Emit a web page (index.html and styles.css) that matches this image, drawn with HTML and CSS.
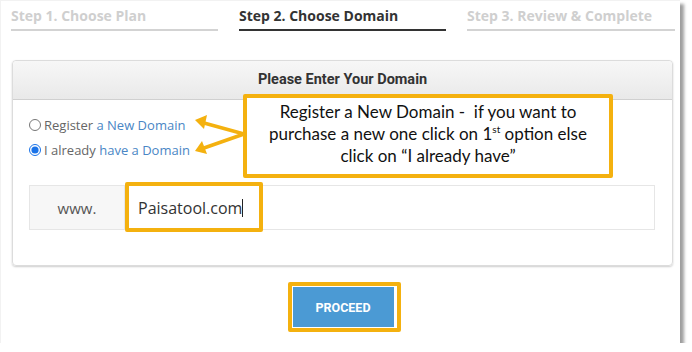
FILE: index.html
```html
<!DOCTYPE html>
<html lang="en">
<head>
    <meta charset="UTF-8">
    <title>Choose Domain</title>
    <link rel="stylesheet" href="styles.css">
</head>
<body>
    <div class="frame">
        <div class="steps">
            <div class="step">Step 1. Choose Plan</div>
            <div class="step active">Step 2. Choose Domain</div>
            <div class="step">Step 3. Review &amp; Complete</div>
        </div>

        <div class="card">
            <div class="card-header">Please Enter Your Domain</div>
            <div class="card-body">
                <ul class="options">
                    <li class="option"><input type="radio" name="domain">Register <span class="link">a New Domain</span></li>
                    <li class="option"><input type="radio" name="domain" checked>I already <span class="link">have a Domain</span></li>
                </ul>
                <div class="input-group">
                    <div class="addon">www.</div>
                    <div class="field">Paisatool.com<span class="caret"></span></div>
                    <div class="mark-input"></div>
                </div>
            </div>
        </div>

        <div class="actions">
            <div class="mark-button">
                <button class="btn">PROCEED</button>
            </div>
        </div>

        <div class="note">Register a New Domain -&nbsp; if you want to<br>purchase a new one click on 1<sup>st</sup> option else<br>click on “I already have”</div>

        <svg class="arrows" width="680" height="343" viewBox="0 0 680 343">
            <g stroke="#f4b10f" stroke-width="3.5" stroke-linecap="round">
                <line x1="244" y1="134" x2="204" y2="123"/>
                <line x1="244" y1="134" x2="204" y2="148"/>
            </g>
            <g fill="#f4b10f">
                <polygon points="195,120 207,115 204,129"/>
                <polygon points="195,151 202,141 207,154"/>
            </g>
        </svg>
    </div>
</body>
</html>
```

FILE: styles.css
```css
body {
    margin: 0;
    background-color: #fff;
    font-family: "Open Sans", sans-serif;
}
.frame {
    position: relative;
    width: 679px;
    height: 342px;
    background-color: #fff;
    border-left: 1px solid #f2f2f2;
    border-top: 1px solid #f2f2f2;
    box-shadow: 4px 4px 3px rgba(0, 0, 0, 0.38);
    display: flex;
    flex-direction: column;
}
.steps {
    display: flex;
    gap: 21px;
    padding: 5px 0 0 10px;
}
.step {
    width: 207px;
    font-size: 14px;
    font-weight: 700;
    line-height: 20px;
    color: #cfcfcf;
    padding-bottom: 3px;
    border-bottom: 2px solid #d3d3d3;
}
.step:last-child {
    width: 208px;
}
.step.active {
    color: #333;
    border-bottom-color: #333;
}
.card {
    margin: 29px 0 0 11px;
    width: 659px;
    border: 1px solid #dcdcdc;
    border-radius: 4px;
    box-shadow: 0 1px 2px rgba(0, 0, 0, 0.2);
}
.card-header {
    height: 38px;
    line-height: 38px;
    text-align: center;
    font-family: Roboto, sans-serif;
    font-size: 14.5px;
    font-weight: 700;
    color: #333;
    background: linear-gradient(#f7f7f7, #e9e9e9);
    border-bottom: 1px solid #d0d0d0;
    border-radius: 4px 4px 0 0;
}
.card-body {
    padding: 12px 17px 35px 16px;
}
.options {
    list-style: none;
    margin: 0;
    padding: 0;
}
.option {
    display: flex;
    align-items: center;
    height: 25px;
    font-size: 13px;
    color: #666;
    white-space: pre;
}
.option input {
    width: 12px;
    height: 12px;
    margin: 0 3px 0 0;
    accent-color: #1a73e8;
}
.link {
    color: #4a86c5;
}
.input-group {
    position: relative;
    display: flex;
    height: 45px;
    margin-top: 23px;
}
.addon {
    width: 94px;
    border: 1px solid #e6e6e6;
    background-color: #f7f7f7;
    color: #555;
    font-size: 15px;
    display: flex;
    align-items: center;
    justify-content: center;
}
.field {
    flex: 1;
    border: 1px solid #e6e6e6;
    border-left: none;
    display: flex;
    align-items: center;
    padding-left: 13px;
    font-size: 16px;
    color: #333;
}
.caret {
    width: 1px;
    height: 18px;
    background-color: #222;
}
.mark-input {
    position: absolute;
    left: 96px;
    top: -3px;
    width: 130px;
    height: 42px;
    border: 4px solid #f4b10f;
    border-radius: 2px;
}
.actions {
    display: flex;
    justify-content: center;
    padding-left: 7px;
    margin-top: 16px;
}
.mark-button {
    border: 4px solid #f4b10f;
    border-radius: 2px;
    padding: 1px 3px 1px 1px;
    background-color: #fff;
}
.btn {
    display: block;
    width: 101px;
    height: 40px;
    border: none;
    background-color: #4b9ad4;
    color: #fff;
    font-family: Roboto, sans-serif;
    font-size: 12.5px;
    font-weight: 700;
}
.note {
    position: absolute;
    left: 242px;
    top: 93px;
    width: 362px;
    height: 73px;
    padding-top: 3px;
    border: 4px solid #f4b10f;
    border-radius: 2px;
    background-color: #fff;
    text-align: center;
    font-family: Lato, sans-serif;
    font-size: 17px;
    line-height: 22px;
    color: #111;
}
.note sup {
    font-size: 10px;
    line-height: 0;
}
.arrows {
    position: absolute;
    left: -1px;
    top: -1px;
    pointer-events: none;
}
```
